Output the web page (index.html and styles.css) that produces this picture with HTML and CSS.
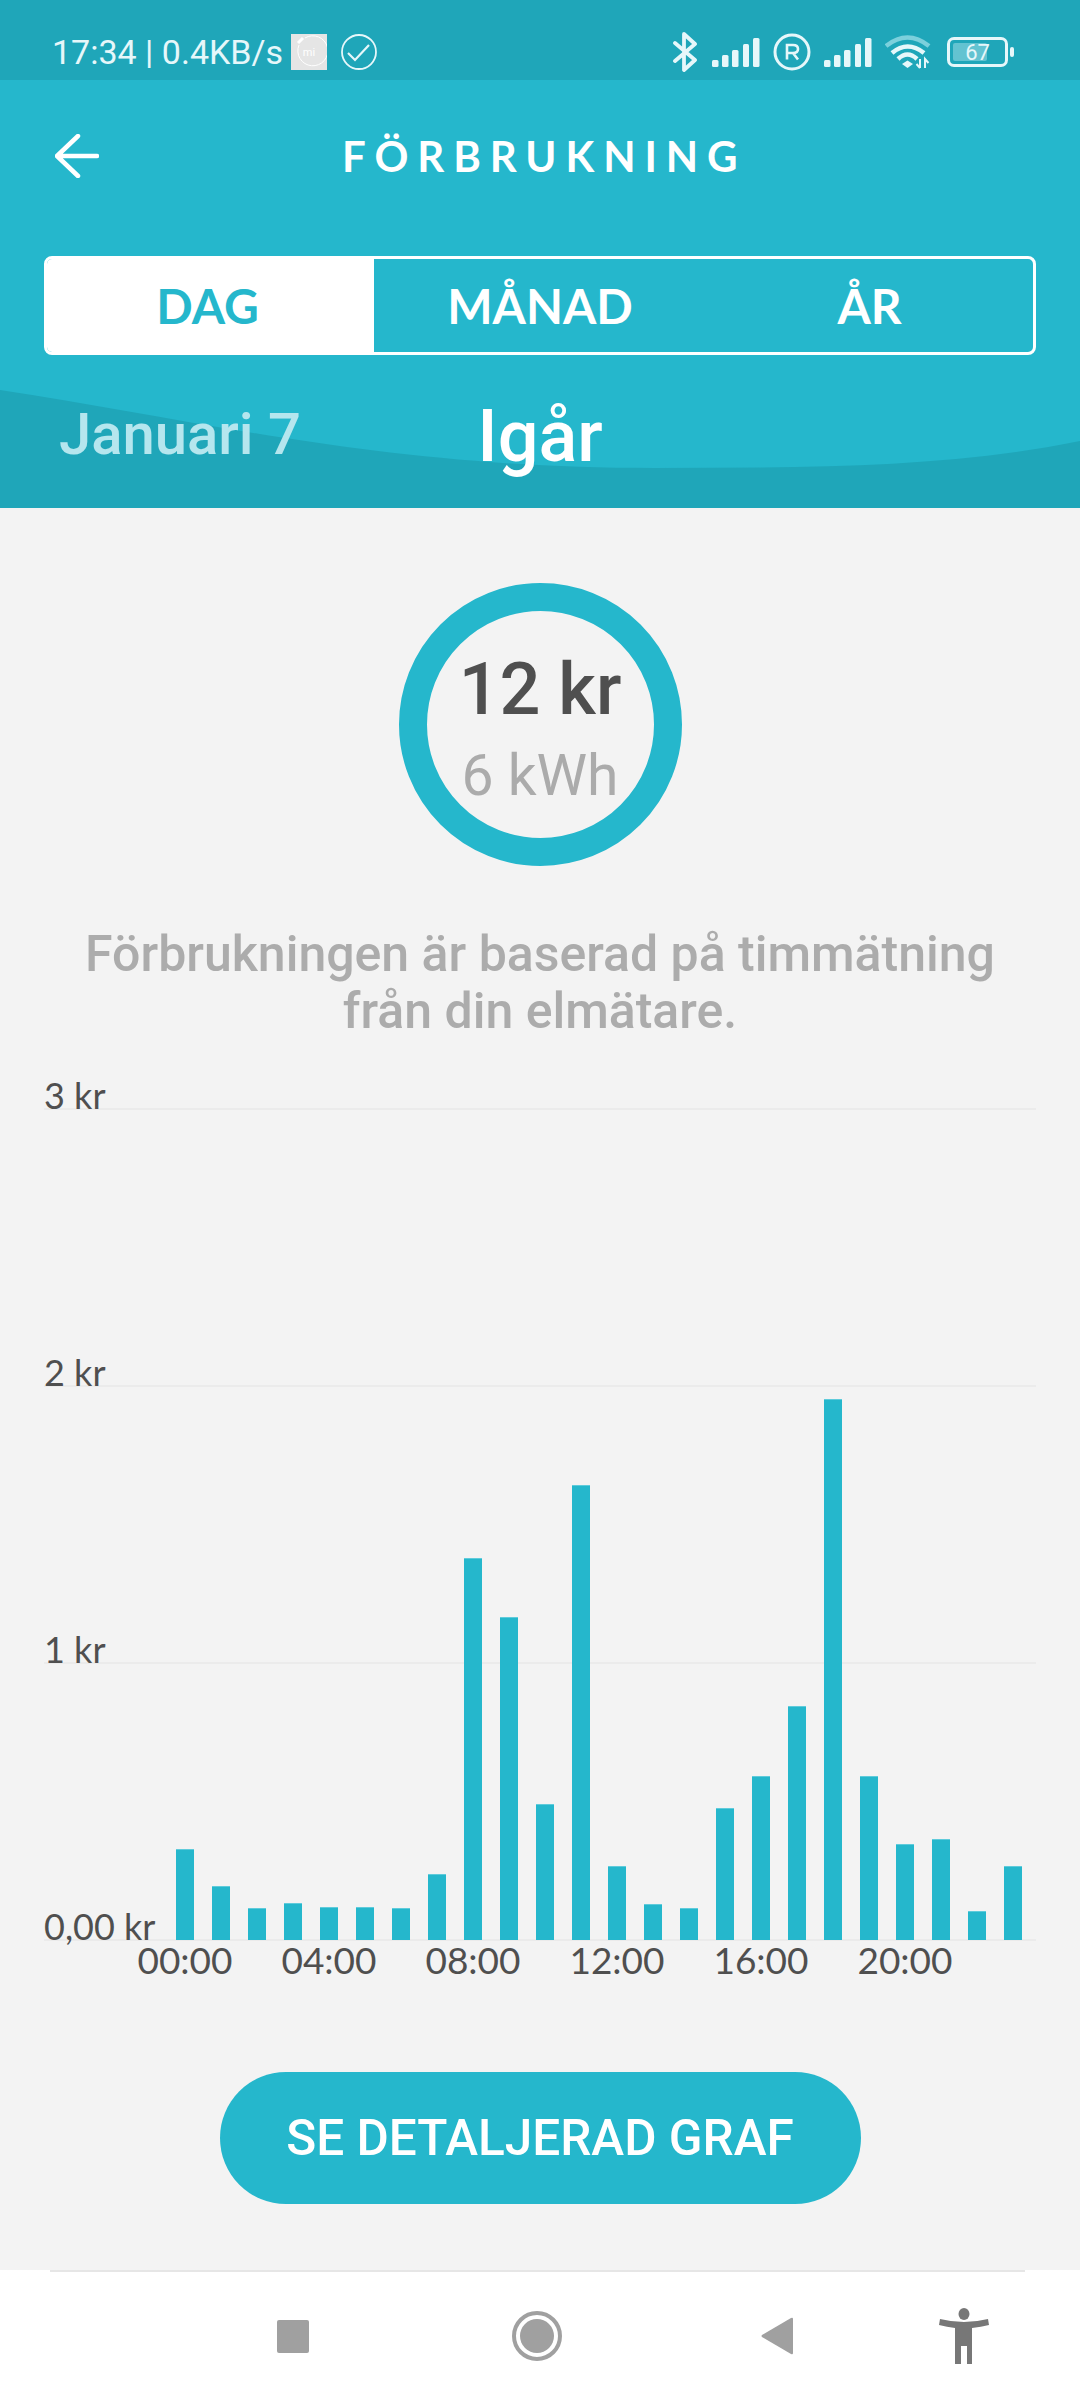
FILE: index.html
```html
<!DOCTYPE html>
<html lang="en">
<head>
    <meta charset="UTF-8">
    <meta name="viewport" content="width=device-width, initial-scale=1.0">
    <title>Förbrukning</title>
    <link rel="stylesheet" href="styles.css">
</head>
<body>
    <div class="phone">
        <!-- Android status bar -->
        <div class="status-bar">
            <span class="status-text">17:34 | 0.4KB/s</span>
            <svg class="icon-mi" width="36" height="36" viewBox="0 0 36 36">
                <rect width="36" height="36" fill="#e5e5e5"/>
                <path d="M8 11A15 15 0 1 0 14 4" fill="none" stroke="#fff" stroke-width="1"/>
                <path d="M7 9L12 4" stroke="#fff" stroke-width="3"/>
                <text x="18" y="22" text-anchor="middle" class="mi-text">mi</text>
            </svg>
            <svg class="icon-check" width="36" height="36" viewBox="0 0 36 36" fill="none" stroke="#e6f7fa">
                <circle cx="18" cy="18" r="17" stroke-width="1.8"/>
                <path d="M7 19L14 26L28 11" stroke-width="2.2"/>
            </svg>
            <div class="status-right">
                <svg class="icon-bt" width="26" height="40" viewBox="0 0 26 40" fill="none" stroke="#e6f7fa" stroke-width="3.8" stroke-linejoin="round" stroke-linecap="round">
                    <path d="M3 11L23 28L12 38V2L23 12L3 29"/>
                </svg>
                <svg class="icon-signal" width="48" height="30" viewBox="0 0 48 30" fill="#e6f7fa">
                    <rect x="0" y="23" width="6.500" height="7" rx="1.500"/>
                    <rect x="10" y="18" width="6.500" height="12" rx="1.500"/>
                    <rect x="20" y="13" width="6.500" height="17" rx="1.500"/>
                    <rect x="31" y="7" width="6" height="23" rx="1.500"/>
                    <rect x="41" y="1" width="6.500" height="29" rx="1.500"/>
                </svg>
                <svg class="icon-r" width="38" height="38" viewBox="0 0 38 38" fill="none" stroke="#e6f7fa">
                    <circle cx="19" cy="19" r="17" stroke-width="3"/>
                    <path d="M14 26.500V12H20Q25 12 25 16Q25 20 20 20H14M20 20L25 26.500" stroke-width="2.600"/>
                </svg>
                <svg class="icon-signal" width="48" height="30" viewBox="0 0 48 30" fill="#e6f7fa">
                    <rect x="0" y="23" width="6.500" height="7" rx="1.500"/>
                    <rect x="10" y="18" width="6.500" height="12" rx="1.500"/>
                    <rect x="20" y="13" width="6.500" height="17" rx="1.500"/>
                    <rect x="31" y="7" width="6" height="23" rx="1.500"/>
                    <rect x="41" y="1" width="6.500" height="29" rx="1.500"/>
                </svg>
                <svg class="icon-wifi" width="46" height="34" viewBox="0 0 46 34" fill="none" stroke-width="4.500">
                    <path d="M1 11Q22.500 -6 44 11" stroke="#7cd0dc"/>
                    <path d="M7 18Q22.500 5 39 18" stroke="#e6f7fa"/>
                    <path d="M13 24Q22.500 15 32 24" stroke="#e6f7fa"/>
                    <path d="M17 29L22.500 25.500L28 29L22.500 33Z" fill="#e6f7fa" stroke="none"/>
                    <path d="M35 33V24M31.500 29L35 33M40 33V24L43.500 28" stroke="#e6f7fa" stroke-width="2"/>
                </svg>
                <div class="battery">
                    <div class="battery-body">
                        <div class="battery-fill"></div>
                        <span class="battery-text">67</span>
                    </div>
                    <div class="battery-nub"></div>
                </div>
            </div>
        </div>

        <!-- Header with title, tabs and date -->
        <header class="header">
            <svg class="wave" width="1080" height="128" viewBox="0 0 1080 128">
                <path d="M0 10C200 40 380 88 654 88C800 88 950 88 1080 61V128H0Z" fill="#1fa6b9"/>
            </svg>
            <div class="title-row">
                <svg class="back" width="44" height="44" viewBox="0 0 44 44" fill="none" stroke="#fff" stroke-width="4.500" stroke-linecap="round" stroke-linejoin="round">
                    <path d="M23 2L2 22L23 42M2 22H42"/>
                </svg>
                <h1 class="title">FÖRBRUKNING</h1>
            </div>
            <div class="tabs">
                <div class="tab active">DAG</div>
                <div class="tab">MÅNAD</div>
                <div class="tab">ÅR</div>
            </div>
            <div class="dates">
                <div class="date prev">Januari 7</div>
                <div class="date current">Igår</div>
            </div>
        </header>

        <main class="content">
            <div class="ring">
                <div class="ring-cost">12 kr</div>
                <div class="ring-kwh">6 kWh</div>
            </div>
            <p class="note">Förbrukningen är baserad på timmätning<br>från din elmätare.</p>

            <!-- Bar chart -->
            <div class="chart">
                <div class="grid">
                    <div class="grid-row first"><span>3 kr</span></div>
                    <div class="grid-row"><span>2 kr</span></div>
                    <div class="grid-row"><span>1 kr</span></div>
                    <div class="grid-row"><span>0,00 kr</span></div>
                    <div class="bars">
                        <div class="bar" style="height: 91px"></div>
                        <div class="bar" style="height: 54px"></div>
                        <div class="bar" style="height: 32px"></div>
                        <div class="bar" style="height: 37px"></div>
                        <div class="bar" style="height: 33px"></div>
                        <div class="bar" style="height: 33px"></div>
                        <div class="bar" style="height: 32px"></div>
                        <div class="bar" style="height: 66px"></div>
                        <div class="bar" style="height: 382px"></div>
                        <div class="bar" style="height: 323px"></div>
                        <div class="bar" style="height: 136px"></div>
                        <div class="bar" style="height: 455px"></div>
                        <div class="bar" style="height: 74px"></div>
                        <div class="bar" style="height: 36px"></div>
                        <div class="bar" style="height: 32px"></div>
                        <div class="bar" style="height: 132px"></div>
                        <div class="bar" style="height: 164px"></div>
                        <div class="bar" style="height: 234px"></div>
                        <div class="bar" style="height: 541px"></div>
                        <div class="bar" style="height: 164px"></div>
                        <div class="bar" style="height: 96px"></div>
                        <div class="bar" style="height: 101px"></div>
                        <div class="bar" style="height: 29px"></div>
                        <div class="bar" style="height: 74px"></div>
                    </div>
                </div>
                <div class="hours">
                    <span>00:00</span>
                    <span>04:00</span>
                    <span>08:00</span>
                    <span>12:00</span>
                    <span>16:00</span>
                    <span>20:00</span>
                </div>
            </div>

            <button class="detail-button" type="button">SE DETALJERAD GRAF</button>
        </main>

        <!-- Navigation bar -->
        <nav class="nav">
            <div class="nav-line"></div>
            <div class="nav-icons">
                <svg class="nav-square" width="32" height="33" viewBox="0 0 32 33">
                    <rect width="32" height="33" rx="2" fill="#a0a0a0"/>
                </svg>
                <svg class="nav-circle" width="50" height="50" viewBox="0 0 50 50" fill="#a0a0a0">
                    <circle cx="25" cy="25" r="23" fill="none" stroke="#a0a0a0" stroke-width="4"/>
                    <circle cx="25" cy="25" r="17"/>
                </svg>
                <svg class="nav-back" width="32" height="38" viewBox="0 0 32 38">
                    <path d="M32 2V36Q32 38 30 37L1 20Q0 19 1 18L30 1Q32 0 32 2Z" fill="#a0a0a0"/>
                </svg>
                <svg class="nav-person" width="50" height="56" viewBox="0 0 50 56" fill="#777">
                    <ellipse cx="25" cy="6" rx="5.500" ry="6"/>
                    <path d="M1 11Q25 17 49 11L50 17Q42 19 33 20V56H28V38H22V56H16V20Q8 19 0 17Z"/>
                </svg>
            </div>
        </nav>
    </div>
</body>
</html>
```

FILE: styles.css
```css
/* Page basics */
body {
    margin: 0;
    background-color: #f3f3f3;
    font-family: Roboto, sans-serif;
}

.phone {
    width: 1080px;
    height: 2400px;
    display: flex;
    flex-direction: column;
    overflow: hidden;
}

/* Status bar */
.status-bar {
    height: 80px;
    box-sizing: border-box;
    padding: 24px 66px 0 52px;
    display: flex;
    align-items: center;
    background-color: #1fa6b9;
    color: #e6f7fa;
}

.status-text {
    font-size: 34px;
    white-space: nowrap;
}

.icon-mi {
    margin-left: 8px;
}

.mi-text {
    font-family: Roboto, sans-serif;
    font-size: 11px;
    fill: #fff;
}

.icon-check {
    margin-left: 14px;
}

.status-right {
    margin-left: auto;
    display: flex;
    align-items: center;
}

.icon-bt {
    margin-right: 14px;
}

.icon-signal {
    margin-right: 13px;
}

.icon-r {
    margin-right: 13px;
}

.icon-wifi {
    margin-right: 16px;
}

.battery {
    display: flex;
    align-items: center;
}

.battery-body {
    width: 61px;
    height: 30px;
    box-sizing: border-box;
    border: 3px solid #e6f7fa;
    border-radius: 7px;
    position: relative;
    display: flex;
    align-items: center;
    justify-content: center;
}

.battery-fill {
    position: absolute;
    left: 3px;
    top: 3px;
    bottom: 3px;
    width: 34px;
    background-color: #63c3d1;
    border-radius: 2px;
}

.battery-text {
    position: relative;
    font-size: 22px;
    color: #e6f7fa;
}

.battery-nub {
    width: 4px;
    height: 10px;
    margin-left: 2px;
    background-color: #e6f7fa;
    border-radius: 2px;
}

/* Header */
.header {
    height: 428px;
    position: relative;
    background-color: #25b7cc;
    color: white;
}

.wave {
    position: absolute;
    left: 0;
    bottom: 0;
}

.title-row {
    height: 176px;
    box-sizing: border-box;
    padding: 0 0 24px 55px;
    display: flex;
    align-items: center;
    position: relative;
}

.title {
    margin: 0 0 0 243px;
    font-family: Lato, sans-serif;
    font-size: 42px;
    font-weight: 700;
    letter-spacing: 8.9px;
    line-height: 1;
}

.tabs {
    position: relative;
    margin: 0 44px;
    height: 99px;
    display: grid;
    grid-template-columns: 327px 332px 1fr;
    box-sizing: border-box;
    border: 3px solid white;
    border-radius: 8px;
    overflow: hidden;
}

.tab {
    display: flex;
    align-items: center;
    justify-content: center;
    font-family: Lato, sans-serif;
    font-size: 48px;
    font-weight: 700;
}

.tab.active {
    padding-right: 6px;
    background-color: white;
    color: #25b7cc;
}

.dates {
    position: relative;
    display: grid;
    grid-template-columns: repeat(3, 360px);
    padding-top: 44px;
}

.date {
    text-align: center;
    white-space: nowrap;
}

.date.prev {
    font-size: 58px;
    font-weight: 500;
    line-height: 70px;
    color: #b5e6ee;
}

.date.current {
    padding-top: 3px;
    font-size: 72px;
    font-weight: 500;
    line-height: 70px;
}

/* Main content */
.content {
    flex: 1;
    display: flex;
    flex-direction: column;
    align-items: center;
}

.ring {
    width: 283px;
    height: 283px;
    margin-top: 75px;
    padding-top: 9px;
    box-sizing: border-box;
    border: 28px solid #25b7cc;
    border-radius: 50%;
    display: flex;
    flex-direction: column;
    align-items: center;
    justify-content: center;
}

.ring-cost {
    font-size: 72px;
    font-weight: 500;
    line-height: 84px;
    color: #4f4f4f;
}

.ring-kwh {
    margin-top: 9px;
    font-size: 57px;
    line-height: 70px;
    color: #ababab;
}

.note {
    margin: 60px 0 0;
    font-size: 50px;
    font-weight: 500;
    line-height: 57px;
    text-align: center;
    color: #acacac;
}

/* Chart */
.chart {
    width: 992px;
    margin-top: 10px;
    font-family: Lato, sans-serif;
    color: #4f4f4f;
}

.grid {
    position: relative;
}

.grid-row {
    height: 277px;
    box-sizing: border-box;
    border-bottom: 2px solid #ebebeb;
    display: flex;
    align-items: flex-end;
    font-size: 36px;
    line-height: 36px;
}

.grid-row.first {
    height: 60px;
}

.grid-row span {
    margin-bottom: -5px;
}

.bars {
    position: absolute;
    left: 132px;
    bottom: 1px;
    display: flex;
    align-items: flex-end;
    gap: 18px;
}

.bar {
    width: 18px;
    box-sizing: border-box;
    border-top: 1px solid #5fcbdb;
    background-color: #25b7cc;
}

.hours {
    display: flex;
    padding-left: 69px;
    font-size: 37px;
    line-height: 38px;
}

.hours span {
    width: 144px;
    text-align: center;
}

.detail-button {
    width: 641px;
    height: 132px;
    margin-top: 93px;
    padding: 0;
    border: none;
    border-radius: 66px;
    background-color: #25b7cc;
    color: white;
    font-family: Roboto, sans-serif;
    font-size: 49.5px;
    font-weight: 500;
}

/* Bottom navigation */
.nav {
    height: 130px;
    background-color: white;
}

.nav-line {
    height: 2px;
    margin: 0 55px 0 50px;
    background-color: #e6e6e6;
}

.nav-icons {
    height: 128px;
    box-sizing: border-box;
    padding-left: 277px;
    display: flex;
    align-items: center;
}

.nav-circle {
    margin-left: 203px;
}

.nav-back {
    margin-left: 199px;
}

.nav-person {
    margin-left: 146px;
}
```
